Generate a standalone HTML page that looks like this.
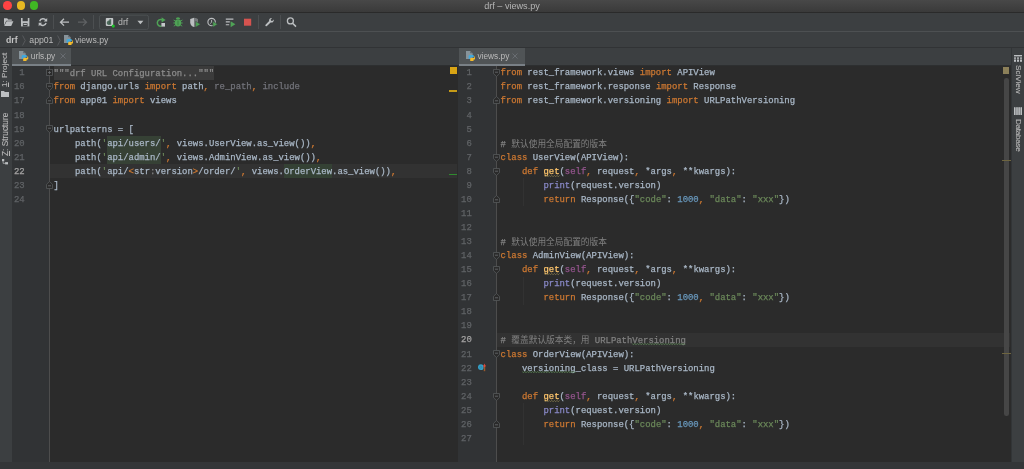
<!DOCTYPE html>
<html lang="zh"><head><meta charset="utf-8"><title>drf – views.py</title><style>
*{box-sizing:border-box}
html,body{margin:0;padding:0}
body{width:1024px;height:469px;overflow:hidden;background:#2b2b2b;position:relative;font-family:"Liberation Sans","Noto Sans CJK SC",sans-serif;font-size:8.6px;color:#bbbbbb}
.abs{position:absolute}
#title{left:0;top:0;width:1024px;height:13px;background:linear-gradient(#484848,#3a3a3a);border-bottom:1px solid #2a2a2a;text-align:center;line-height:13.2px;color:#b4b4b4;font-size:9.1px}
.tl{position:absolute;top:1.05px;width:8.5px;height:8.5px;border-radius:50%}
#toolbar{left:0;top:13px;width:1024px;height:19px;background:#3c3f41;border-bottom:1px solid #4d5052}
#nav{left:0;top:32px;width:1024px;height:16px;background:#3c3f41;border-bottom:1px solid #313335}
#tabs{left:0;top:48px;width:1024px;height:18px;background:#3c3f41;border-bottom:1px solid #2d2f30}
.tab{position:absolute;top:48px;height:17.7px;background:#505456;border-bottom:2px solid #798086}
.tab span{position:absolute;top:3.1px;color:#bbbbbb;font-size:8.3px;line-height:10px;white-space:nowrap}
.pyi{position:absolute}
.sep{position:absolute;top:15px;width:1px;height:14px;background:#4c4f51}
#lstripe{left:0;top:48px;width:12px;height:414px;background:#3c3f41}
#rstripe{left:1010.5px;top:48px;width:13.5px;height:414px;background:#3c3f41;border-left:1px solid #323537}
#bottom{left:0;top:461.8px;width:1024px;height:7.2px;background:#343638}
.gut{position:absolute;top:65.6px;height:396.4px;background:#313335}
.caret{position:absolute;height:14.06px;background:#323232}
.ln{position:absolute;left:0;height:14.06px;line-height:14.06px;text-align:right;font-family:"Liberation Mono",monospace;font-size:8.93px;color:#606366;white-space:pre;-webkit-text-stroke:.25px}
.ln.cur{color:#a4a3a3}
.cl{position:absolute;height:14.06px;line-height:14.06px;font-family:"Liberation Mono","Noto Sans CJK SC",monospace;font-size:8.93px;color:#a9b7c6;white-space:pre;-webkit-text-stroke:.25px}
.k{color:#cc7832}
.s{color:#6a8759}
.n{color:#6897bb}
.cm{color:#808080}
.u{color:#72737a}
.b{color:#8888c6}
.self{color:#94558d}
.fn{color:#ffc66d}
.cj{font-family:"Noto Sans CJK SC",sans-serif;font-size:8.7px;-webkit-text-stroke:0}
.inj{background:#364135;padding:2.74px 0 1.24px}
.hl{background:#344134;padding:2.74px 0 1.24px}
.fold{background:#3b3b3b;color:#8c8c8c;padding:2.74px 0 1.24px}
.fm{position:absolute}
.vt{position:absolute;white-space:nowrap;font-size:8.4px;color:#b6b6b6;line-height:10px;-webkit-text-stroke:.12px}
</style></head><body><div id="root" style="position:absolute;left:0;top:0;width:1024px;height:469px;will-change:transform">
<div id="title" class="abs">drf – views.py</div>
<div class="tl" style="left:3px;background:#fd4343"></div>
<div class="tl" style="left:16.65px;background:#e6b822"></div>
<div class="tl" style="left:29.8px;background:#40b824"></div>

<div id="toolbar" class="abs"></div>
<div id="nav" class="abs"></div>
<div id="tabs" class="abs"></div>
<div id="lstripe" class="abs"></div>
<div id="rstripe" class="abs"></div>

<!-- TOOLBAR ICONS -->
<svg class="abs" style="left:0;top:12px" width="310" height="20" viewBox="0 0 310 20">
 <!-- folder -->
 <path d="M4 6.2h3.2l1 1.2h3.6v1.3H6.2L4 13.6z" fill="#bcbfc1"/><path d="M6.6 9.2h6.8l-2.2 4.8H4.3z" fill="#bcbfc1"/>
 <!-- save -->
 <path d="M21 6h8.4v8.4H21z" fill="#bcbfc1"/><rect x="22.6" y="6" width="5.2" height="3.2" fill="#3c3f41"/><rect x="22.9" y="11.2" width="4.6" height="3.2" fill="#3c3f41"/><rect x="23.6" y="12" width="3.2" height="1" fill="#bcbfc1"/>
 <!-- sync -->
 <g fill="none" stroke="#bcbfc1" stroke-width="1.4"><path d="M46 8.6a3.4 3.4 0 0 0-6.3 .6"/><path d="M39.8 11.6a3.4 3.4 0 0 0 6.3-.6"/></g>
 <path d="M47.2 6v3.4h-3.4z" fill="#bcbfc1"/><path d="M38.7 14.2v-3.4h3.4z" fill="#bcbfc1"/>
 <!-- back -->
 <g fill="none" stroke="#bcbfc1" stroke-width="1.3"><path d="M69 10.2h-8.4M64 6.8l-3.5 3.4l3.5 3.4"/></g>
 <!-- fwd -->
 <g fill="none" stroke="#5e6163" stroke-width="1.3"><path d="M78 10.2h8.4M83 6.8l3.5 3.4l-3.5 3.4"/></g>
 <!-- combo -->
 <rect x="99.5" y="3.2" width="49" height="14.2" rx="2" fill="none" stroke="#4c5052" stroke-width="1"/>
 <rect x="105.8" y="5.9" width="7.4" height="8" rx=".8" fill="#c4c7c9"/>
 <path d="M107.400 9.200c.6-.6 1.400-.8 2-.6v-1.400h1.800v5.600h-1.600c-1.200.4-2.600-.2-2.800-1.600c-.1-.8.100-1.500.6-2z" fill="#4d6a5c"/><path d="M109.400 8.600v4" stroke="#3a5548" stroke-width=".7"/>
 <circle cx="113.300" cy="14.100" r="1.600" fill="#1fbf2a"/>
 <path d="M137.4 8.8h6l-3 3.4z" fill="#bcbfc1"/>
 <!-- rerun -->
 <g fill="none" stroke="#4fa356" stroke-width="1.5"><path d="M161.400 14.200a3.400 3.400 0 1 1 .8-6.400"/></g>
 <path d="M161.600 5.200l4 2.700l-4 2.700z" fill="#4fa356"/>
 <rect x="161.4" y="11" width="3.6" height="3.6" fill="#c4c7c9"/>
 <!-- bug -->
 <ellipse cx="178" cy="10.800" rx="3.200" ry="3.600" fill="#4fa356"/><path d="M175.800 7a2.200 1.800 0 0 1 4.400 0z" fill="#4fa356"/>
 <g stroke="#4fa356" stroke-width=".9"><path d="M173.600 8l2.200 1.200M182.400 8l-2.200 1.200M173.300 11h2M182.700 11h-2M173.800 14.200l2-1.400M182.200 14.200l-2-1.400"/></g>
 <path d="M178 8.6v4.6" stroke="#37743c" stroke-width=".8"/>
 <g transform="translate(0 .5)">
 <!-- coverage -->
 <path d="M190.2 6.4l3.8-1.2l3.8 1.2v3.6c0 2.4-1.8 3.8-3.8 4.6c-2-.8-3.8-2.2-3.8-4.6z" fill="#bcbfc1"/><path d="M194 5.2l3.8 1.2v3.6c0 2.4-1.8 3.8-3.8 4.6z" fill="#3c3f41" opacity=".55"/>
 <path d="M195.6 8.8l4.8 3l-4.8 3z" fill="#4fa356" stroke="#3c3f41" stroke-width=".5"/>
 <!-- profile -->
 <circle cx="211.6" cy="9.6" r="3.7" fill="none" stroke="#bcbfc1" stroke-width="1.1"/><path d="M211.6 7.4v2.4l-1.4 1.2" fill="none" stroke="#bcbfc1" stroke-width=".9"/>
 <path d="M212.8 8.8l4.8 3l-4.8 3z" fill="#4fa356" stroke="#3c3f41" stroke-width=".6"/>
 <!-- concurrency -->
 <g stroke="#bcbfc1" stroke-width="1.1"><path d="M225.8 6.6h7.6M225.8 9.4h4M225.8 12.2h3.4"/></g>
 <path d="M230.6 8.8l4.8 3l-4.8 3z" fill="#4fa356"/>
 </g>
 <!-- stop -->
 <rect x="244" y="6.7" width="7.2" height="7" fill="#d5534f"/>
 <!-- wrench -->
 <path transform="translate(269.5 9.85) scale(.86) translate(-270.2 -11.2)" d="M265.6 14.6l4.2-4.3a2.8 2.8 0 0 1 3.4-3.6l-1.7 1.8l.5 1.4l1.4.4l1.7-1.8a2.8 2.8 0 0 1-3.6 3.4l-4.3 4.2a1.1 1.1 0 0 1-1.6-1.5z" fill="#bcbfc1"/>
 <!-- search -->
 <circle cx="290.4" cy="8.9" r="3" fill="none" stroke="#bcbfc1" stroke-width="1.3"/><path d="M292.6 11.2l3.4 3.4" stroke="#bcbfc1" stroke-width="1.5"/>
</svg>
<div class="sep" style="left:53px"></div>
<div class="sep" style="left:93px"></div>
<div class="sep" style="left:258px"></div>
<div class="sep" style="left:280px"></div>
<div class="abs" style="left:118px;top:16.6px;font-size:8.8px;line-height:10px;color:#bbbbbb">drf</div>

<!-- NAV BAR -->
<div class="abs" style="left:6px;top:34.5px;font-size:8.7px;line-height:10px;font-weight:bold;color:#c4c4c4">drf</div>
<svg class="abs" style="left:21.5px;top:35px" width="4" height="11" viewBox="0 0 4 11"><path d="M.6 .5l2.6 5l-2.6 5" fill="none" stroke="#5f6264" stroke-width=".8"/></svg>
<div class="abs" style="left:29.3px;top:34.5px;font-size:8.7px;line-height:10px;color:#bbbbbb">app01</div>
<svg class="abs" style="left:56.5px;top:35px" width="4" height="11" viewBox="0 0 4 11"><path d="M.6 .5l2.6 5l-2.6 5" fill="none" stroke="#5f6264" stroke-width=".8"/></svg>
<div class="abs" style="left:63.6px;top:34.8px;width:10px;height:11px"><svg class="pyi" viewBox="0 0 20 22" width="9.5" height="10.45"><path d="M0 0h9l5 5v12H0z" fill="#87939a"/><path d="M9 0l5 5H9z" fill="#5a6268"/><path d="M9.500 8.500h5a2 2 0 0 1 2 2v2.500h-5.500a2 2 0 0 0-2 2v1.500H7.500a2 2 0 0 1-2-2v-3a3 3 0 0 1 4-3z" fill="#3fa9dc"/><path d="M19.500 12.500v3.500a2 2 0 0 1-2 2h-1.500v1.500a2.200 2.200 0 0 1-2.200 2.200h-3a2 2 0 0 1-2-2v-2.700a2 2 0 0 1 2-2h4.700a2 2 0 0 0 2-2v-2.500z" fill="#f3bb2c"/></svg></div>
<div class="abs" style="left:75px;top:34.5px;font-size:8.7px;line-height:10px;color:#bbbbbb">views.py</div>

<!-- TABS -->
<div class="tab" style="left:12px;width:59px"><div class="abs" style="left:7px;top:3px;width:10px;height:11px"><svg class="pyi" viewBox="0 0 20 22" width="9.5" height="10.45"><path d="M0 0h9l5 5v12H0z" fill="#87939a"/><path d="M9 0l5 5H9z" fill="#5a6268"/><path d="M9.500 8.500h5a2 2 0 0 1 2 2v2.500h-5.500a2 2 0 0 0-2 2v1.500H7.500a2 2 0 0 1-2-2v-3a3 3 0 0 1 4-3z" fill="#3fa9dc"/><path d="M19.500 12.500v3.500a2 2 0 0 1-2 2h-1.500v1.500a2.200 2.200 0 0 1-2.200 2.200h-3a2 2 0 0 1-2-2v-2.700a2 2 0 0 1 2-2h4.700a2 2 0 0 0 2-2v-2.500z" fill="#f3bb2c"/></svg></div><span style="left:18.8px">urls.py</span>
<svg class="abs" style="left:47.6px;top:5.4px" width="6" height="6" viewBox="0 0 6 6"><path d="M.5 .5l5 5M5.500 .5l-5 5" stroke="#70747a" stroke-width=".8"/></svg></div>
<div class="tab" style="left:458.7px;width:66.4px"><div class="abs" style="left:7px;top:3px;width:10px;height:11px"><svg class="pyi" viewBox="0 0 20 22" width="9.5" height="10.45"><path d="M0 0h9l5 5v12H0z" fill="#87939a"/><path d="M9 0l5 5H9z" fill="#5a6268"/><path d="M9.500 8.500h5a2 2 0 0 1 2 2v2.500h-5.500a2 2 0 0 0-2 2v1.500H7.500a2 2 0 0 1-2-2v-3a3 3 0 0 1 4-3z" fill="#3fa9dc"/><path d="M19.500 12.500v3.500a2 2 0 0 1-2 2h-1.500v1.500a2.200 2.200 0 0 1-2.200 2.200h-3a2 2 0 0 1-2-2v-2.700a2 2 0 0 1 2-2h4.700a2 2 0 0 0 2-2v-2.500z" fill="#f3bb2c"/></svg></div><span style="left:18.8px">views.py</span>
<svg class="abs" style="left:53.8px;top:5.4px" width="6" height="6" viewBox="0 0 6 6"><path d="M.5 .5l5 5M5.500 .5l-5 5" stroke="#70747a" stroke-width=".8"/></svg></div>

<!-- LEFT STRIPE LABELS -->
<div class="vt" style="left:0px;top:87px;transform-origin:0 0;transform:rotate(-90deg);font-size:8.1px"><u>1</u>: Project</div>
<svg class="abs" style="left:1.2px;top:90.8px" width="8" height="6.4" viewBox="0 0 8 6.4"><path d="M0 0h3l.8 1H8v5.400H0z" fill="#bcbfc1"/></svg>
<div class="vt" style="left:0px;top:155.6px;transform-origin:0 0;transform:rotate(-90deg);font-size:8.3px"><u>Z</u>: Structure</div>
<svg class="abs" style="left:2px;top:159.4px" width="6.4" height="5.6" viewBox="0 0 7.4 6.4"><rect x="0" y="0" width="2.6" height="2.6" fill="#bcbfc1"/><rect x="3.6" y="3.6" width="3.6" height="2.6" fill="#bcbfc1"/><path d="M1.300 2.600v2.400h2.400" fill="none" stroke="#bcbfc1" stroke-width=".8"/></svg>

<!-- RIGHT STRIPE LABELS -->
<svg class="abs" style="left:1014px;top:55.200px" width="8" height="6.8" viewBox="0 0 8 6.8"><g fill="#bcbfc1"><rect x="0" y="0" width="8" height="1.4"/><rect x="0" y="2.4" width="2" height="4.4"/><rect x="3" y="2.4" width="2" height="4.4"/><rect x="6" y="2.4" width="2" height="4.4"/></g><path d="M0 4.200h8" stroke="#3c3f41" stroke-width=".7"/></svg>
<div class="vt" style="left:1023px;top:65.400px;transform-origin:0 0;transform:rotate(90deg);font-size:8.1px">SciView</div>
<svg class="abs" style="left:1014px;top:107px" width="8" height="8.4" viewBox="0 0 8 8.4"><g fill="#bcbfc1"><rect x="0" y="0" width="1.6" height="8.4" rx=".8"/><rect x="2.200" y="0" width="1.600" height="8.400" rx=".8"/><rect x="4.300" y="0" width="1.600" height="8.400" rx=".8"/><rect x="6.400" y="0" width="1.600" height="8.400" rx=".8"/></g></svg>
<div class="vt" style="left:1023px;top:119px;transform-origin:0 0;transform:rotate(90deg);font-size:8.1px;letter-spacing:-.27px">Database</div>

<!-- LEFT EDITOR -->
<div class="gut" style="left:12px;width:38.100px;border-right:1px solid #4d4d4d"></div>
<div class="caret" style="left:50.100px;top:164.02px;width:407.300px"></div>
<div class="ln" style="top:66.35px;width:24.6px">1</div>
<div class="cl" style="top:66.35px;left:53.6px"><span class="fold">"""drf URL Configuration..."""</span></div>
<div class="ln" style="top:80.41px;width:24.6px">16</div>
<div class="cl" style="top:80.41px;left:53.6px"><span class="k">from</span> django.urls <span class="k">import</span> path<span class="k">,</span><span class="u"> re_path</span><span class="k">,</span><span class="u"> include</span></div>
<div class="ln" style="top:94.47px;width:24.6px">17</div>
<div class="cl" style="top:94.47px;left:53.6px"><span class="k">from</span> app01 <span class="k">import</span> views</div>
<div class="ln" style="top:108.53px;width:24.6px">18</div>
<div class="ln" style="top:122.59px;width:24.6px">19</div>
<div class="cl" style="top:122.59px;left:53.6px">urlpatterns = [</div>
<div class="ln" style="top:136.65px;width:24.6px">20</div>
<div class="cl" style="top:136.65px;left:53.6px">    path(<span class="s">'</span><span class="inj">api/users/</span><span class="s">'</span><span class="k">,</span> views.UserView.as_view())<span class="k">,</span></div>
<div class="ln" style="top:150.71px;width:24.6px">21</div>
<div class="cl" style="top:150.71px;left:53.6px">    path(<span class="s">'</span><span class="inj">api/admin/</span><span class="s">'</span><span class="k">,</span> views.AdminView.as_view())<span class="k">,</span></div>
<div class="ln cur" style="top:164.77px;width:24.6px">22</div>
<div class="cl" style="top:164.77px;left:53.6px">    path(<span class="s">'</span>api/<span class="k">&lt;</span>str<span class="cm">:</span>version<span class="k">&gt;</span>/order/<span class="s">'</span><span class="k">,</span> views.<span class="hl">OrderView</span>.as_view())<span class="k">,</span></div>
<div class="ln" style="top:178.83px;width:24.6px">23</div>
<div class="cl" style="top:178.83px;left:53.6px">]</div>
<div class="ln" style="top:192.89px;width:24.6px">24</div>
<!-- left error stripe -->
<div class="abs" style="left:450px;top:67px;width:7px;height:6.600px;background:#d9a414"></div>
<div class="abs" style="left:448.800px;top:90px;width:8.200px;height:2px;background:#c59a17"></div>
<div class="abs" style="left:448.800px;top:173.800px;width:8.200px;height:1.400px;background:#2f8a2f"></div>

<!-- RIGHT EDITOR -->
<div class="gut" style="left:458.2px;width:38.700px;border-right:1px solid #4d4d4d"></div>
<div class="caret" style="left:496.900px;top:332.74px;width:513.600px"></div>
<div class="ln" style="top:66.35px;width:471.8px">1</div>
<div class="cl" style="top:66.35px;left:500.6px"><span class="k">from</span> rest_framework.views <span class="k">import</span> APIView</div>
<div class="ln" style="top:80.41px;width:471.8px">2</div>
<div class="cl" style="top:80.41px;left:500.6px"><span class="k">from</span> rest_framework.response <span class="k">import</span> Response</div>
<div class="ln" style="top:94.47px;width:471.8px">3</div>
<div class="cl" style="top:94.47px;left:500.6px"><span class="k">from</span> rest_framework.versioning <span class="k">import</span> URLPathVersioning</div>
<div class="ln" style="top:108.53px;width:471.8px">4</div>
<div class="ln" style="top:122.59px;width:471.8px">5</div>
<div class="ln" style="top:136.65px;width:471.8px">6</div>
<div class="cl" style="top:136.65px;left:500.6px"><span class="cm"># <span class="cj">默认使用全局配置的版本</span></span></div>
<div class="ln" style="top:150.71px;width:471.8px">7</div>
<div class="cl" style="top:150.71px;left:500.6px"><span class="k">class</span> UserView(APIView):</div>
<div class="ln" style="top:164.77px;width:471.8px">8</div>
<div class="cl" style="top:164.77px;left:500.6px">    <span class="k">def</span> <span class="fn wavy">get</span>(<span class="self">self</span><span class="k">,</span> request<span class="k">,</span> *args<span class="k">,</span> **kwargs):</div>
<div class="ln" style="top:178.83px;width:471.8px">9</div>
<div class="cl" style="top:178.83px;left:500.6px">        <span class="b">print</span>(request.version)</div>
<div class="ln" style="top:192.89px;width:471.8px">10</div>
<div class="cl" style="top:192.89px;left:500.6px">        <span class="k">return</span> Response({<span class="s">"code"</span>: <span class="n">1000</span><span class="k">,</span> <span class="s">"data"</span>: <span class="s">"xxx"</span>})</div>
<div class="ln" style="top:206.95px;width:471.8px">11</div>
<div class="ln" style="top:221.01px;width:471.8px">12</div>
<div class="ln" style="top:235.07px;width:471.8px">13</div>
<div class="cl" style="top:235.07px;left:500.6px"><span class="cm"># <span class="cj">默认使用全局配置的版本</span></span></div>
<div class="ln" style="top:249.13px;width:471.8px">14</div>
<div class="cl" style="top:249.13px;left:500.6px"><span class="k">class</span> AdminView(APIView):</div>
<div class="ln" style="top:263.19px;width:471.8px">15</div>
<div class="cl" style="top:263.19px;left:500.6px">    <span class="k">def</span> <span class="fn wavy">get</span>(<span class="self">self</span><span class="k">,</span> request<span class="k">,</span> *args<span class="k">,</span> **kwargs):</div>
<div class="ln" style="top:277.25px;width:471.8px">16</div>
<div class="cl" style="top:277.25px;left:500.6px">        <span class="b">print</span>(request.version)</div>
<div class="ln" style="top:291.31px;width:471.8px">17</div>
<div class="cl" style="top:291.31px;left:500.6px">        <span class="k">return</span> Response({<span class="s">"code"</span>: <span class="n">1000</span><span class="k">,</span> <span class="s">"data"</span>: <span class="s">"xxx"</span>})</div>
<div class="ln" style="top:305.37px;width:471.8px">18</div>
<div class="ln" style="top:319.43px;width:471.8px">19</div>
<div class="ln cur" style="top:333.49px;width:471.8px">20</div>
<div class="cl" style="top:333.49px;left:500.6px"><span class="cm"># <span class="cj">覆盖默认版本类，用</span> URLPath<span class="typo">Versioning</span></span></div>
<div class="ln" style="top:347.55px;width:471.8px">21</div>
<div class="cl" style="top:347.55px;left:500.6px"><span class="k">class</span> OrderView(APIView):</div>
<div class="ln" style="top:361.61px;width:471.8px">22</div>
<div class="cl" style="top:361.61px;left:500.6px">    <span class="typo">versioning</span>_class = URLPathVersioning</div>
<div class="ln" style="top:375.67px;width:471.8px">23</div>
<div class="ln" style="top:389.73px;width:471.8px">24</div>
<div class="cl" style="top:389.73px;left:500.6px">    <span class="k">def</span> <span class="fn wavy">get</span>(<span class="self">self</span><span class="k">,</span> request<span class="k">,</span> *args<span class="k">,</span> **kwargs):</div>
<div class="ln" style="top:403.79px;width:471.8px">25</div>
<div class="cl" style="top:403.79px;left:500.6px">        <span class="b">print</span>(request.version)</div>
<div class="ln" style="top:417.85px;width:471.8px">26</div>
<div class="cl" style="top:417.85px;left:500.6px">        <span class="k">return</span> Response({<span class="s">"code"</span>: <span class="n">1000</span><span class="k">,</span> <span class="s">"data"</span>: <span class="s">"xxx"</span>})</div>
<div class="ln" style="top:431.91px;width:471.8px">27</div>
<!-- indent guides -->
<div class="abs" style="left:523.400px;top:178.08px;width:1px;height:28.12px;background:#323232"></div>
<div class="abs" style="left:523.400px;top:276.50px;width:1px;height:28.12px;background:#323232"></div>
<div class="abs" style="left:523.400px;top:403.04px;width:1px;height:42.18px;background:#323232"></div>
<!-- override gutter icon -->
<svg class="abs" style="left:478.4px;top:363.46px" width="8.4" height="8.4" viewBox="0 0 8.4 8.4"><circle cx="2.8" cy="4.2" r="2.85" fill="#359fc6"/><circle cx="2.8" cy="4.2" r="1.1" fill="none" stroke="#2a7f9f" stroke-width=".6"/><path d="M6.5 8.2v-6" stroke="#9a5a2c" stroke-width="1.5"/><path d="M5.300 3.200l1.200-2.600l1.200 2.600z" fill="#e04a3c"/><path d="M6.500 4v-2" stroke="#e04a3c" stroke-width="1.500"/></svg>
<!-- right error stripe + scrollbar -->
<div class="abs" style="left:1003px;top:67px;width:6.400px;height:6.600px;background:#8c8059"></div>
<div class="abs" style="left:1004.200px;top:77.500px;width:4.400px;height:338px;border-radius:2.200px;background:#464646"></div>
<div class="abs" style="left:1001.600px;top:160.400px;width:9px;height:1px;background:#6e6540"></div>
<div class="abs" style="left:1001.600px;top:353.400px;width:9px;height:1px;background:#6e6540"></div>

<svg class="fm" style="left:46.1px;top:69.1px" width="7" height="7" viewBox="0 0 7 7"><rect x=".5" y=".5" width="6" height="6" fill="#2b2b2b" stroke="#56595b" stroke-width=".8"/><path d="M2 3.5h3M3.5 2v3" stroke="#6c6f71" stroke-width=".8"/></svg><svg class="fm" style="left:46.1px;top:83.2px" width="7" height="8" viewBox="0 0 7 8"><path d="M.5 .5h6v4.2l-3 2.8l-3-2.8z" fill="#2b2b2b" stroke="#56595b" stroke-width=".8"/><path d="M2 3.2h3" stroke="#6c6f71" stroke-width=".8"/></svg><svg class="fm" style="left:46.1px;top:96.2px" width="7" height="8" viewBox="0 0 7 8"><path d="M.5 7.5h6v-4.2l-3-2.8l-3 2.8z" fill="#2b2b2b" stroke="#56595b" stroke-width=".8"/><path d="M2 4.8h3" stroke="#6c6f71" stroke-width=".8"/></svg><svg class="fm" style="left:46.1px;top:125.4px" width="7" height="8" viewBox="0 0 7 8"><path d="M.5 .5h6v4.2l-3 2.8l-3-2.8z" fill="#2b2b2b" stroke="#56595b" stroke-width=".8"/><path d="M2 3.2h3" stroke="#6c6f71" stroke-width=".8"/></svg><svg class="fm" style="left:46.1px;top:180.6px" width="7" height="8" viewBox="0 0 7 8"><path d="M.5 7.5h6v-4.2l-3-2.8l-3 2.8z" fill="#2b2b2b" stroke="#56595b" stroke-width=".8"/><path d="M2 4.8h3" stroke="#6c6f71" stroke-width=".8"/></svg><svg class="fm" style="left:492.9px;top:69.1px" width="7" height="8" viewBox="0 0 7 8"><path d="M.5 .5h6v4.2l-3 2.8l-3-2.8z" fill="#2b2b2b" stroke="#56595b" stroke-width=".8"/><path d="M2 3.2h3" stroke="#6c6f71" stroke-width=".8"/></svg><svg class="fm" style="left:492.9px;top:96.2px" width="7" height="8" viewBox="0 0 7 8"><path d="M.5 7.5h6v-4.2l-3-2.8l-3 2.8z" fill="#2b2b2b" stroke="#56595b" stroke-width=".8"/><path d="M2 4.8h3" stroke="#6c6f71" stroke-width=".8"/></svg><svg class="fm" style="left:492.9px;top:153.5px" width="7" height="8" viewBox="0 0 7 8"><path d="M.5 .5h6v4.2l-3 2.8l-3-2.8z" fill="#2b2b2b" stroke="#56595b" stroke-width=".8"/><path d="M2 3.2h3" stroke="#6c6f71" stroke-width=".8"/></svg><svg class="fm" style="left:492.9px;top:167.5px" width="7" height="8" viewBox="0 0 7 8"><path d="M.5 .5h6v4.2l-3 2.8l-3-2.8z" fill="#2b2b2b" stroke="#56595b" stroke-width=".8"/><path d="M2 3.2h3" stroke="#6c6f71" stroke-width=".8"/></svg><svg class="fm" style="left:492.9px;top:194.7px" width="7" height="8" viewBox="0 0 7 8"><path d="M.5 7.5h6v-4.2l-3-2.8l-3 2.8z" fill="#2b2b2b" stroke="#56595b" stroke-width=".8"/><path d="M2 4.8h3" stroke="#6c6f71" stroke-width=".8"/></svg><svg class="fm" style="left:492.9px;top:251.9px" width="7" height="8" viewBox="0 0 7 8"><path d="M.5 .5h6v4.2l-3 2.8l-3-2.8z" fill="#2b2b2b" stroke="#56595b" stroke-width=".8"/><path d="M2 3.2h3" stroke="#6c6f71" stroke-width=".8"/></svg><svg class="fm" style="left:492.9px;top:266.0px" width="7" height="8" viewBox="0 0 7 8"><path d="M.5 .5h6v4.2l-3 2.8l-3-2.8z" fill="#2b2b2b" stroke="#56595b" stroke-width=".8"/><path d="M2 3.2h3" stroke="#6c6f71" stroke-width=".8"/></svg><svg class="fm" style="left:492.9px;top:293.1px" width="7" height="8" viewBox="0 0 7 8"><path d="M.5 7.5h6v-4.2l-3-2.8l-3 2.8z" fill="#2b2b2b" stroke="#56595b" stroke-width=".8"/><path d="M2 4.8h3" stroke="#6c6f71" stroke-width=".8"/></svg><svg class="fm" style="left:492.9px;top:350.3px" width="7" height="8" viewBox="0 0 7 8"><path d="M.5 .5h6v4.2l-3 2.8l-3-2.8z" fill="#2b2b2b" stroke="#56595b" stroke-width=".8"/><path d="M2 3.2h3" stroke="#6c6f71" stroke-width=".8"/></svg><svg class="fm" style="left:492.9px;top:392.5px" width="7" height="8" viewBox="0 0 7 8"><path d="M.5 .5h6v4.2l-3 2.8l-3-2.8z" fill="#2b2b2b" stroke="#56595b" stroke-width=".8"/><path d="M2 3.2h3" stroke="#6c6f71" stroke-width=".8"/></svg><svg class="fm" style="left:492.9px;top:419.6px" width="7" height="8" viewBox="0 0 7 8"><path d="M.5 7.5h6v-4.2l-3-2.8l-3 2.8z" fill="#2b2b2b" stroke="#56595b" stroke-width=".8"/><path d="M2 4.8h3" stroke="#6c6f71" stroke-width=".8"/></svg>
<svg class="fm" style="left:543.5px;top:174.62px" width="16.1" height="2.2" viewBox="0 0 16.1 2.2"><polyline points="0.0,0.4 1.3,1.8 2.6,0.4 3.9,1.8 5.2,0.4 6.5,1.8 7.8,0.4 9.1,1.8 10.4,0.4 11.7,1.8 13.0,0.4 14.3,1.8 15.6,0.4" fill="none" stroke="#8f8152" stroke-width=".7"/></svg><svg class="fm" style="left:543.5px;top:273.04px" width="16.1" height="2.2" viewBox="0 0 16.1 2.2"><polyline points="0.0,0.4 1.3,1.8 2.6,0.4 3.9,1.8 5.2,0.4 6.5,1.8 7.8,0.4 9.1,1.8 10.4,0.4 11.7,1.8 13.0,0.4 14.3,1.8 15.6,0.4" fill="none" stroke="#8f8152" stroke-width=".7"/></svg><svg class="fm" style="left:543.5px;top:399.58px" width="16.1" height="2.2" viewBox="0 0 16.1 2.2"><polyline points="0.0,0.4 1.3,1.8 2.6,0.4 3.9,1.8 5.2,0.4 6.5,1.8 7.8,0.4 9.1,1.8 10.4,0.4 11.7,1.8 13.0,0.4 14.3,1.8 15.6,0.4" fill="none" stroke="#8f8152" stroke-width=".7"/></svg><svg class="fm" style="left:632.2px;top:343.34px" width="53.6" height="2.2" viewBox="0 0 53.6 2.2"><polyline points="0.0,0.4 1.3,1.8 2.6,0.4 3.9,1.8 5.2,0.4 6.5,1.8 7.8,0.4 9.1,1.8 10.4,0.4 11.7,1.8 13.0,0.4 14.3,1.8 15.6,0.4 16.9,1.8 18.2,0.4 19.5,1.8 20.8,0.4 22.1,1.8 23.4,0.4 24.7,1.8 26.0,0.4 27.3,1.8 28.6,0.4 29.9,1.8 31.2,0.4 32.5,1.8 33.8,0.4 35.1,1.8 36.4,0.4 37.7,1.8 39.0,0.4 40.3,1.8 41.6,0.4 42.9,1.8 44.2,0.4 45.5,1.8 46.8,0.4 48.1,1.8 49.4,0.4 50.7,1.8 52.0,0.4 53.3,1.8" fill="none" stroke="#5f8f58" stroke-width=".7"/></svg><svg class="fm" style="left:522.0px;top:371.46px" width="53.6" height="2.2" viewBox="0 0 53.6 2.2"><polyline points="0.0,0.4 1.3,1.8 2.6,0.4 3.9,1.8 5.2,0.4 6.5,1.8 7.8,0.4 9.1,1.8 10.4,0.4 11.7,1.8 13.0,0.4 14.3,1.8 15.6,0.4 16.9,1.8 18.2,0.4 19.5,1.8 20.8,0.4 22.1,1.8 23.4,0.4 24.7,1.8 26.0,0.4 27.3,1.8 28.6,0.4 29.9,1.8 31.2,0.4 32.5,1.8 33.8,0.4 35.1,1.8 36.4,0.4 37.7,1.8 39.0,0.4 40.3,1.8 41.6,0.4 42.9,1.8 44.2,0.4 45.5,1.8 46.8,0.4 48.1,1.8 49.4,0.4 50.7,1.8 52.0,0.4 53.3,1.8" fill="none" stroke="#5f8f58" stroke-width=".7"/></svg>

<div id="bottom" class="abs"></div>
</div></body></html>
